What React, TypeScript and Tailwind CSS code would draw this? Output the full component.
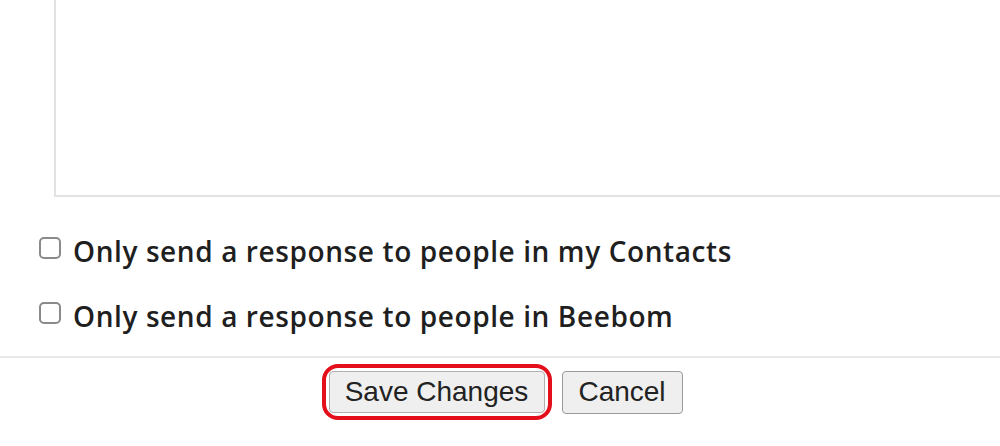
const Option = ({ label }: { label: string }) => (
  <label className="flex items-center h-[32px] pl-[39px] gap-[12px]">
    <span className="w-[22px] h-[22px] border-2 border-[#8a8a8a] rounded-[5px] bg-white shrink-0" />
    <span
      className="text-[28px] font-semibold text-[#1f1f1f] leading-none tracking-[0.6px] pt-[5px]"
      style={{ fontFamily: '"Open Sans", "Noto Sans", sans-serif' }}
    >
      {label}
    </span>
  </label>
);

export default function App() {
  return (
    <div className="w-[1000px] h-[446px] bg-white overflow-hidden">
      <div className="ml-[54px] h-[197px] border-l-2 border-b-2 border-[#e2e2e2]" />

      <div className="mt-[35px] flex flex-col gap-[33px]">
        <Option label="Only send a response to people in my Contacts" />
        <Option label="Only send a response to people in Beebom" />
      </div>

      <div className="mt-[27px] h-[2px] bg-[#e8e8e8]" />

      <div
        className="mt-[6px] flex justify-center items-center gap-[10px] pl-[4px]"
        style={{ fontFamily: '"Liberation Sans", Arial, sans-serif' }}
      >
        <div className="border-[4px] border-[#e3101c] rounded-[16px] p-[3px]">
          <button className="h-[42px] w-[216px] bg-[#efefef] border border-[#b0b0b0] rounded-[4px] text-[28px] text-[#222] leading-none">
            Save Changes
          </button>
        </div>
        <button className="h-[43px] w-[121px] bg-[#efefef] border border-[#9a9a9a] rounded-[4px] text-[28px] text-[#222] leading-none">
          Cancel
        </button>
      </div>
    </div>
  );
}
